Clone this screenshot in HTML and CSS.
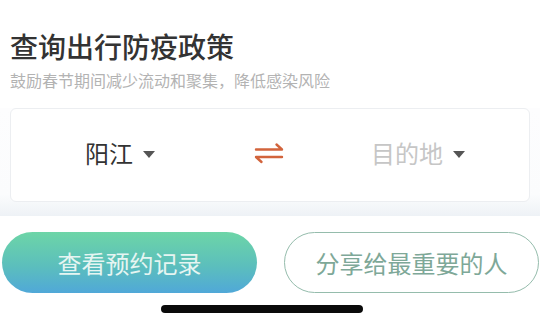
FILE: index.html
```html
<!DOCTYPE html>
<html lang="zh">
<head>
<meta charset="utf-8">
<link rel="stylesheet" href="styles.css">
</head>
<body>
<div class="page">
  <header class="head">
    <h1 class="title">查询出行防疫政策</h1>
    <p class="sub">鼓励春节期间减少流动和聚集，降低感染风险</p>
  </header>
  <section class="card-wrap">
    <div class="card">
      <div class="place from"><span>阳江</span><i class="tri"></i></div>
      <svg class="swap" width="30" height="22" viewBox="0 0 30 22" fill="none" stroke="#d2643c" stroke-width="2.4" stroke-linecap="round" stroke-linejoin="round">
        <path d="M2 7.5 H28 L22.5 2.5"/>
        <path d="M28 15 H2 L7.5 20"/>
      </svg>
      <div class="place to"><span>目的地</span><i class="tri"></i></div>
    </div>
  </section>
  <div class="actions">
    <button class="btn primary">查看预约记录</button>
    <button class="btn outline">分享给最重要的人</button>
  </div>
  <div class="home-bar"></div>
</div>
</body>
</html>
```
FILE: styles.css
```css
* { box-sizing: border-box; margin: 0; padding: 0; }
html, body { width: 540px; height: 320px; overflow: hidden; background: #fff; }
body { font-family: "Noto Sans CJK SC", "Noto Sans", sans-serif; }
.page { display: flex; flex-direction: column; }
.head { padding: 32px 10px 0; }
.title { font-size: 28px; line-height: 28px; font-weight: 500; color: #333; }
.sub { margin-top: 12px; font-size: 16px; line-height: 16px; color: #b3b3b3; }
.card-wrap {
  margin-top: 20px;
  padding: 0 10px 14px;
  background: linear-gradient(to bottom, #fdfdfe 0%, #fbfcfd 80%, #eef2f6 100%);
}
.card {
  height: 94px;
  background: #fff;
  border: 1px solid #eceef1;
  border-radius: 6px;
  display: flex;
  align-items: center;
  padding-left: 74px;
  padding-bottom: 4px;
}
.place { display: flex; align-items: center; font-size: 24px; line-height: 24px; }
.place span { display: block; }
.from { color: #333; }
.to { color: #c6c6c6; margin-left: 87px; }
.tri {
  display: block;
  width: 0; height: 0;
  margin-left: 10px;
  margin-top: 2px;
  border-left: 6px solid transparent;
  border-right: 6px solid transparent;
  border-top: 7px solid #555;
}
.swap { display: block; margin-left: 99px; }
.actions { margin-top: 16px; padding-left: 2px; display: flex; gap: 27px; }
.btn {
  width: 255px; height: 61px;
  border-radius: 31px;
  font-family: inherit;
  font-size: 24px;
  line-height: 24px;
  display: flex; align-items: center; justify-content: center;
}
.primary {
  border: none;
  color: #e6f5f2;
  background: linear-gradient(to bottom, #6dd5a7 0%, #5cbfbc 55%, #50a8d8 100%);
}
.outline {
  background: #fff;
  border: 1.5px solid #95bcac;
  color: #7ea898;
}
.home-bar {
  margin: 12px 0 0 161px;
  width: 202px; height: 8px;
  border-radius: 4px;
  background: #0a0a0a;
}
```
